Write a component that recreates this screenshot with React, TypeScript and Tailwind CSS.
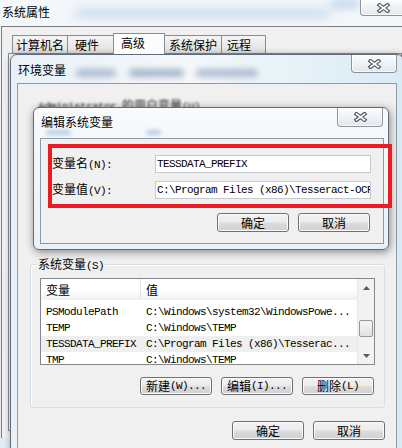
import type { ReactNode } from 'react'

const cjk = "font-['Noto_Sans_CJK_SC',sans-serif]"
const mono = "font-['Liberation_Mono','DejaVu_Sans_Mono',monospace] text-[11px] tracking-[-0.6px]"

type VarRow = { name: string; value: string; selected?: boolean }

const systemVars: VarRow[] = [
  { name: 'PSModulePath', value: 'C:\\Windows\\system32\\WindowsPowe...' },
  { name: 'TEMP', value: 'C:\\Windows\\TEMP' },
  { name: 'TESSDATA_PREFIX', value: 'C:\\Program Files (x86)\\Tesserac...', selected: true },
  { name: 'TMP', value: 'C:\\Windows\\TEMP' },
]

const tabs = [
  { label: '计算机名', cls: 'w-[56px] pl-[3px]' },
  { label: '硬件', cls: 'w-[47px] pl-[7px]' },
  { label: '高级', cls: 'w-[52px] pl-[7px]', active: true },
  { label: '系统保护', cls: 'w-[58px] pl-[4px]' },
  { label: '远程', cls: 'w-[45px] pl-[5px]' },
]

function CloseButton({ className = '' }: { className?: string }) {
  return (
    <div
      className={`flex items-center justify-center rounded-b-[4px] border border-t-0 border-[#8d939c] bg-[linear-gradient(180deg,#fbfcfd,#e2e8ee)] shadow-[inset_0_0_0_1px_rgba(255,255,255,0.7)] ${className}`}
    >
      <svg width="15" height="10" viewBox="0 0 15 10">
        <path d="M3.5 2 L11.5 8 M11.5 2 L3.5 8" stroke="#525a66" strokeWidth="4" strokeLinecap="square" />
        <path d="M3.5 2 L11.5 8 M11.5 2 L3.5 8" stroke="#ffffff" strokeWidth="1.6" strokeLinecap="square" />
      </svg>
    </div>
  )
}

function WinButton({ children, className = '' }: { children: ReactNode; className?: string }) {
  return (
    <div
      className={`flex w-[72px] items-center justify-center rounded-[3px] border border-[#707070] bg-[linear-gradient(180deg,#f2f2f2_0%,#ebebeb_48%,#dddddd_52%,#cfcfcf_100%)] shadow-[inset_0_0_0_1px_#fbfbfb] leading-none ${className}`}
    >
      {children}
    </div>
  )
}

function Arrow({ down = false }: { down?: boolean }) {
  return (
    <svg width="7" height="4" viewBox="0 0 7 4">
      <path d={down ? 'M0 0 H7 L3.5 4 Z' : 'M0 4 H7 L3.5 0 Z'} fill="#5c5c5c" />
    </svg>
  )
}

function ListView() {
  return (
    <div className="flex h-[87px] w-[335px] border border-[#828790] bg-white">
      <div className="flex flex-1 flex-col overflow-hidden">
        <div className="flex h-[21px] shrink-0 bg-[linear-gradient(180deg,#ffffff_0%,#ffffff_55%,#eef0f2_100%)]">
          <div className="w-[100px] border-r border-[#e3e3e3] pl-[5px] leading-[21px]">变量</div>
          <div className="pl-[5px] leading-[21px]">值</div>
        </div>
        <div className="mt-[4px] flex flex-col">
          {systemVars.map((row) => (
            <div
              key={row.name}
              className={`flex h-[16px] shrink-0 items-center whitespace-nowrap ${mono} ${row.selected ? 'bg-[#efefef]' : ''}`}
            >
              <span className="w-[100px] pl-[5px]">{row.name}</span>
              <span className="pl-[5px]">{row.value}</span>
            </div>
          ))}
        </div>
      </div>
      <div className="flex w-[17px] flex-col border-l border-[#e8e8e8] bg-[#f2f2f2]">
        <div className="flex h-[17px] items-center justify-center">
          <Arrow />
        </div>
        <div className="flex-1">
          <div className="mx-[1px] mt-[24px] h-[17px] rounded-[2px] border border-[#979797] bg-[linear-gradient(180deg,#f7f7f7,#e1e1e1)]" />
        </div>
        <div className="flex h-[17px] items-center justify-center">
          <Arrow down />
        </div>
      </div>
    </div>
  )
}

export default function App() {
  return (
    <div
      className={`relative h-[448px] w-[402px] overflow-hidden bg-[linear-gradient(180deg,#f3f7fa_0%,#e2ecf4_100%)] text-[12px] text-black ${cjk}`}
    >
      {/* 系统属性 (back window) */}
      <div className="absolute inset-0 flex flex-col">
        <div className="relative flex h-[26px] items-start justify-between">
          <div className="absolute left-[75px] top-[9px] h-[9px] w-[255px] rounded-full bg-[#c9dcee] blur-[5px]" />
          <div className="absolute left-[330px] top-[0px] h-[8px] w-[30px] rounded-full bg-[#bcd4ec] blur-[4px]" />
          <span className="relative ml-[2px] mt-[4px] leading-[16px]">系统属性</span>
          <CloseButton className="relative -mr-[4px] h-[16px] w-[46px]" />
        </div>
        <div className="ml-[1px] h-[412px] border-l border-t border-[#7c7c7c] bg-[#f0f0f0] pl-[6px] pt-[6px]">
          <div className="ml-[4px] flex h-[20px] items-end">
            {tabs.map((tab) =>
              tab.active ? (
                <div
                  key={tab.label}
                  className={`relative z-10 -mb-px -mr-px h-[21px] border border-b-0 border-[#898c95] bg-[#fcfcfc] pt-[1px] leading-[16px] ${tab.cls}`}
                >
                  {tab.label}
                </div>
              ) : (
                <div
                  key={tab.label}
                  className={`-mr-px h-[18px] border border-b-0 border-[#898c95] bg-[linear-gradient(180deg,#f4f4f4,#e1e1e1)] pt-[1px] leading-[16px] ${tab.cls}`}
                >
                  {tab.label}
                </div>
              ),
            )}
          </div>
          <div className="h-[378px] border border-[#898c95] bg-[#fcfcfc]" />
        </div>
      </div>

      {/* 环境变量 */}
      <div className="absolute left-[10px] top-[54px] flex h-[400px] w-[394px] flex-col rounded-t-[7px] border border-[#5f6b78] bg-[linear-gradient(90deg,#e9f1f7_0%,#f5f8fb_45%,#d8ebf4_100%)] shadow-[0_0_6px_rgba(0,0,0,0.3)]">
        <div className="relative flex h-[28px] items-start justify-between">
          <div className="absolute left-[65px] top-[14px] h-[8px] w-[40px] rounded-full bg-[#7f97b2] opacity-60 blur-[3px]" />
          <div className="absolute left-[118px] top-[14px] h-[8px] w-[55px] rounded-full bg-[#6f8aa8] opacity-60 blur-[3px]" />
          <div className="absolute left-[185px] top-[14px] h-[8px] w-[62px] rounded-full bg-[#7f97b2] opacity-60 blur-[3px]" />
          <span className="relative ml-[7px] mt-[7px] leading-[16px]">环境变量</span>
          <CloseButton className="relative mr-[6px] h-[18px] w-[46px]" />
        </div>
        <div className="mx-[6px] flex-1 border border-[#8e9aa5] bg-[#f0f0f0] pl-[12px] pr-[10px]">
          <div className="h-[180px] pl-[8px] pt-[12px]">
            <span className="whitespace-nowrap leading-[16px] text-[#222] blur-[1.2px]">
              <span className={mono}>Administrator </span>的用户变量<span className={mono}>(U)</span>
            </span>
          </div>

          <div className="relative h-[144px] w-[355px] rounded-[3px] border border-[#d5dfe5] pl-[9px] pt-[13px] shadow-[inset_1px_1px_0_#ffffff]">
            <span className="absolute -top-[9px] left-[6px] bg-[#f0f0f0] px-[1px] leading-[16px]">
              系统变量<span className={mono}>(S)</span>
            </span>
            <ListView />
            <div className="mt-[12px] flex justify-end gap-[9px] pr-[10px]">
              <WinButton className="h-[18px]">
                新建<span className={mono}>(W)...</span>
              </WinButton>
              <WinButton className="h-[18px]">
                编辑<span className={mono}>(I)...</span>
              </WinButton>
              <WinButton className="h-[18px]">
                删除<span className={mono}>(L)</span>
              </WinButton>
            </div>
          </div>

          <div className="mt-[13px] flex justify-end gap-[9px] pr-[1px]">
            <WinButton className="h-[19px]">确定</WinButton>
            <WinButton className="h-[19px]">取消</WinButton>
          </div>
        </div>
      </div>

      {/* 编辑系统变量 */}
      <div className="absolute left-[33px] top-[107px] flex h-[143px] w-[356px] flex-col rounded-[6px] border border-[#5f6b78] bg-[linear-gradient(180deg,#f8fafc_0%,#eaf1f6_100%)] shadow-[1px_2px_8px_rgba(0,0,0,0.45)]">
        <div className="relative flex h-[30px] items-start justify-between">
          <div className="absolute left-[12px] top-[22px] h-[5px] w-[25px] rounded-full bg-[#b6cde3] blur-[2px]" />
          <div className="absolute left-[112px] top-[22px] h-[5px] w-[15px] rounded-full bg-[#b6cde3] blur-[2px]" />
          <span className="relative ml-[7px] mt-[6px] leading-[16px]">编辑系统变量</span>
          <CloseButton className="relative mr-[5px] h-[19px] w-[46px]" />
        </div>
        <div className="ml-[6px] h-[106px] w-[344px] border border-[#8e9aa5] bg-[#f0f0f0] pl-[11px] pt-[16px]">
          <div className="flex h-[18px] items-center">
            <span className="w-[103px] leading-[16px]">
              变量名<span className={mono}>(N):</span>
            </span>
            <div className={`flex h-[18px] w-[216px] items-center overflow-hidden whitespace-nowrap border border-[#c6c9d0] bg-white pl-[1px] ${mono}`}>
              TESSDATA_PREFIX
            </div>
          </div>
          <div className="mt-[8px] flex h-[18px] items-center">
            <span className="w-[103px] leading-[16px]">
              变量值<span className={mono}>(V):</span>
            </span>
            <div className={`flex h-[18px] w-[216px] items-center overflow-hidden whitespace-nowrap border border-[#c6c9d0] bg-white pl-[1px] ${mono}`}>
              {'C:\\Program Files (x86)\\Tesseract-OCR'}
            </div>
          </div>
          <div className="mt-[14px] flex justify-end gap-[9px] pr-[13px]">
            <WinButton className="h-[19px]">确定</WinButton>
            <WinButton className="h-[19px]">取消</WinButton>
          </div>
        </div>
      </div>

      {/* red annotation box */}
      <div className="absolute left-[48px] top-[144px] h-[64px] w-[344px] border-[4px] border-[#ed1c24]" />
    </div>
  )
}
